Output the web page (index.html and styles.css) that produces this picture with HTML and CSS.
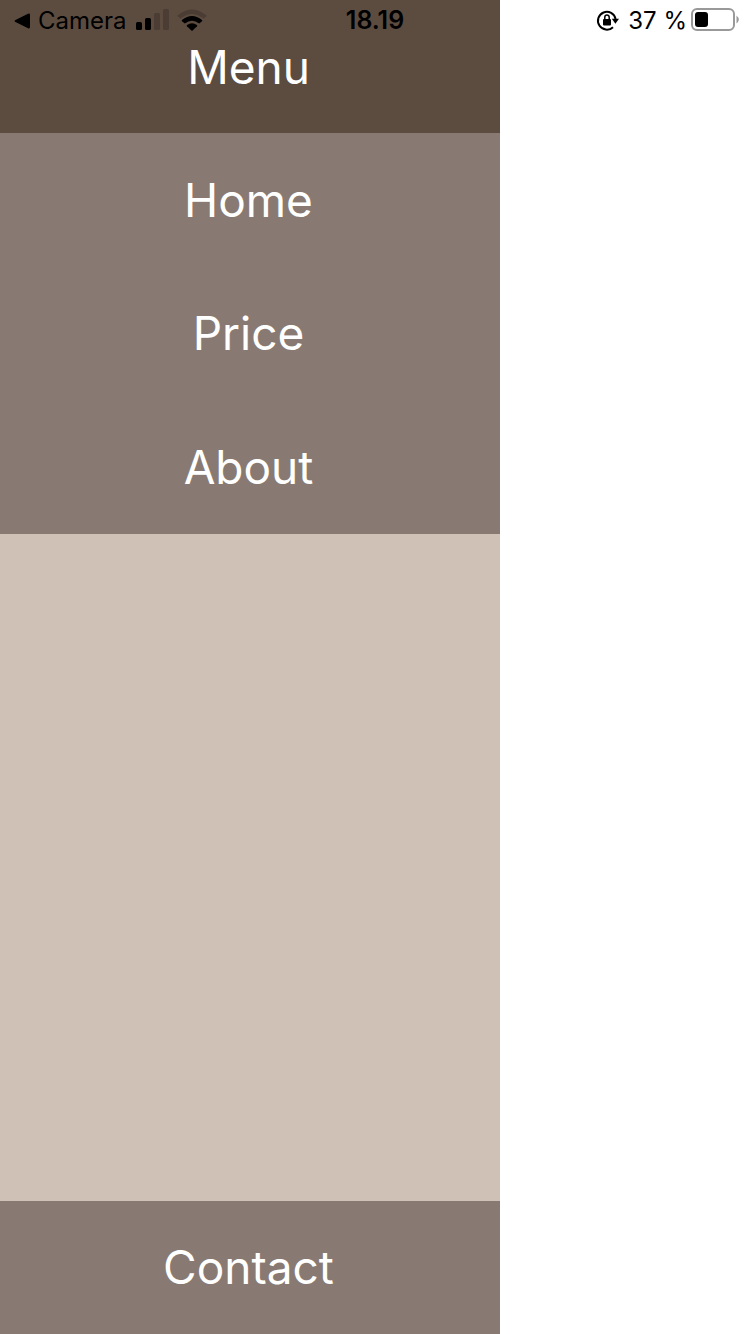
FILE: index.html
```html
<!DOCTYPE html>
<html lang="en">
<head>
<meta charset="utf-8">
<meta name="viewport" content="width=device-width, initial-scale=1">
<title>Menu</title>
<link rel="stylesheet" href="styles.css">
</head>
<body>
<header class="status">
  <div class="status-left">
    <button class="back" type="button">
      <svg width="16" height="16" viewBox="0 0 16 16" aria-hidden="true"><path d="M1 7.200 14 .8Q16 0 16 2V14Q16 16 14 15.200L1 8.800Q0 8 1 7.200Z"/></svg>
      <span>Camera</span>
    </button>
    <svg class="signal" width="33" height="22" viewBox="0 0 33 22" aria-hidden="true">
      <rect y="12" width="6" height="8" rx="1.500"/><rect x="9" y="8" width="6" height="12" rx="1.500"/>
      <g class="faint"><rect x="18" y="3" width="6" height="17" rx="1.500"/><rect x="27" y="-1" width="6" height="21" rx="1.500"/></g>
    </svg>
    <svg class="wifi" width="30" height="22" viewBox="0 0 30 22" aria-hidden="true">
      <path class="faint" d="M.8 5.200Q15-6 29.200 5.200Q29.800 5.800 29.200 6.400L26.500 8.600Q15-.8 3.500 8.600L.8 6.400Q.2 5.800.8 5.200Z"/>
      <path d="M5 10Q15 2 25 10Q25.600 10.600 25 11.200L22.200 13.600Q15 7.800 7.800 13.600L5 11.200Q4.400 10.600 5 10Z"/>
      <path d="M10 15Q15 11.400 20 15Q20.600 15.600 20 16.200L15.600 20.500Q15 21 14.400 20.500L10 16.200Q9.400 15.600 10 15Z"/>
    </svg>
  </div>
  <time class="clock">18.19</time>
  <div class="status-right">
    <svg class="lock" width="22" height="22" viewBox="0 0 22 22" aria-hidden="true">
      <path d="M16 17.200A8.900 8.900 0 1 1 18.600 9" fill="none" stroke="currentColor" stroke-width="2"/>
      <path d="M14.800 8.700H22L18.400 13.800Z"/><rect x="6" y="9" width="8" height="6.500" rx="1"/>
      <path d="M7.800 9.500V7.200a2.200 2.200 0 0 1 4.400 0V9.500" fill="none" stroke="currentColor" stroke-width="1.500"/>
    </svg>
    <span class="percent">37 %</span>
    <svg class="battery" width="48" height="26" viewBox="0 0 48 26" aria-hidden="true">
      <rect x="1" y="1" width="42" height="21" rx="5" fill="none" stroke="#999" stroke-width="2"/>
      <rect x="4" y="4" width="13" height="15" rx="3"/><path d="M45.500 7.500Q50 11.500 45.500 15.500Z" fill="#999"/>
    </svg>
  </div>
</header>
<nav class="drawer">
  <h1 class="item title">Menu</h1>
  <a class="item" href="#home">Home</a>
  <a class="item" href="#price">Price</a>
  <a class="item" href="#about">About</a>
  <a class="item contact" href="#contact">Contact</a>
</nav>
</body>
</html>
```
FILE: styles.css
```css
* { box-sizing: border-box; }
body {
  margin: 0;
  background: #fff;
  color: #000;
  font-family: Inter, "Liberation Sans", sans-serif;
}
.status {
  position: absolute;
  inset: 0 0 auto;
  padding: 0 11px;
  display: grid;
  grid-template-columns: 1fr auto 1fr;
  align-items: center;
  font-size: 24px;
  line-height: 41px;
}
.status svg { fill: currentColor; flex: none; overflow: visible; }
.status .faint { fill: #4b3d34; }
.status-left, .status-right, .back { display: flex; align-items: center; }
.status-left { padding-left: 3px; }
.status-right { justify-content: flex-end; }
.back {
  gap: 8px;
  padding: 0;
  border: 0;
  background: none;
  color: inherit;
  font: inherit;
}
.signal { margin-left: 9px; }
.wifi { margin-left: 8px; }
.clock { font-size: 25px; font-weight: 600; }
.percent { margin: 0 4px 0 9px; }
.drawer {
  width: 66.667%;
  min-height: 100vh;
  display: flex;
  flex-direction: column;
  background: #cfc1b6;
}
.item {
  min-height: 10vh;
  margin: 0;
  padding: 0 3px 0 0;
  display: flex;
  align-items: center;
  justify-content: center;
  background: #887a72;
  color: #fff;
  font-size: 46px;
  font-weight: 400;
  line-height: 60px;
  text-decoration: none;
}
.title { background: #5c4c40; }
.contact { margin-top: auto; }
```
